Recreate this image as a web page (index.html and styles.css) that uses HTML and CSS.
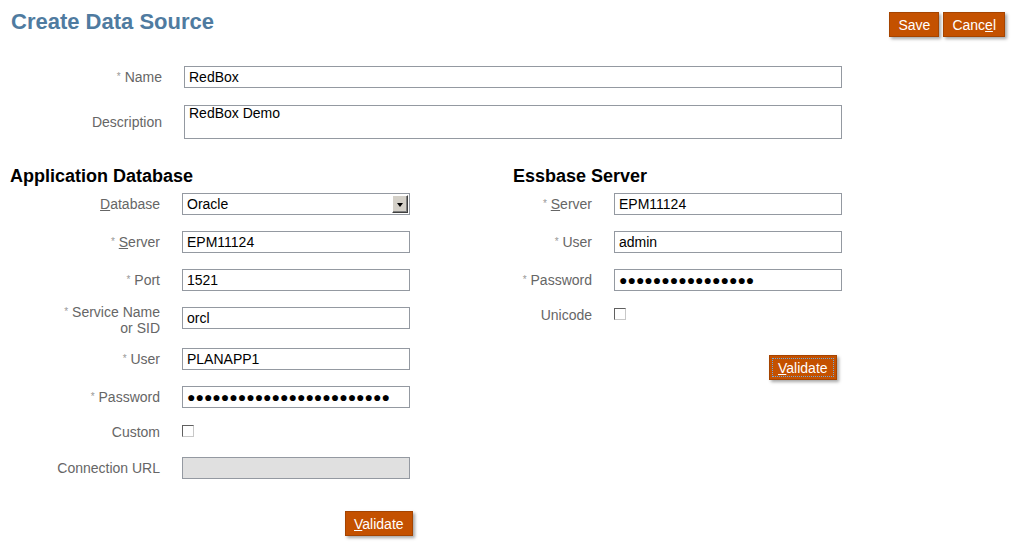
FILE: index.html
```
<!DOCTYPE html>
<html>
<head>
<meta charset="utf-8">
<link rel="stylesheet" href="styles.css">
</head>
<body>
<div class="page">
  <div class="header">
    <h1 class="title">Create Data Source</h1>
    <div class="actions">
      <button class="btn">Save</button>
      <button class="btn">Canc<u>e</u>l</button>
    </div>
  </div>

  <div class="general">
    <div class="grow">
      <div class="lbl glbl"><span class="req">*</span> Name</div>
      <div class="field wide">RedBox</div>
    </div>
    <div class="grow">
      <div class="lbl glbl">Description</div>
      <div class="field wide area">RedBox Demo</div>
    </div>
  </div>

  <div class="cols">
    <div class="section left">
      <h2 class="sechead">Application Database</h2>
      <div class="row">
        <div class="lbl llbl"><u>D</u>atabase</div>
        <div class="field select">Oracle<span class="dd"><span class="tri"></span></span></div>
      </div>
      <div class="row">
        <div class="lbl llbl"><span class="req">*</span> <u>S</u>erver</div>
        <div class="field">EPM11124</div>
      </div>
      <div class="row">
        <div class="lbl llbl"><span class="req">*</span> Port</div>
        <div class="field">1521</div>
      </div>
      <div class="row two">
        <div class="lbl llbl"><span class="req">*</span> Service Name<br>or SID</div>
        <div class="field top">orcl</div>
      </div>
      <div class="row">
        <div class="lbl llbl"><span class="req">*</span> User</div>
        <div class="field">PLANAPP1</div>
      </div>
      <div class="row">
        <div class="lbl llbl"><span class="req">*</span> Password</div>
        <div class="field pw">●●●●●●●●●●●●●●●●●●●●●●●●</div>
      </div>
      <div class="row chkrow">
        <div class="lbl llbl">Custom</div>
        <div class="chk"></div>
      </div>
      <div class="row urlrow">
        <div class="lbl llbl">Connection URL</div>
        <div class="field disabled"></div>
      </div>
      <div class="valrow lval">
        <button class="btn"><u>V</u>alidate</button>
      </div>
    </div>

    <div class="section right">
      <h2 class="sechead">Essbase Server</h2>
      <div class="row">
        <div class="lbl rlbl"><span class="req">*</span> <u>S</u>erver</div>
        <div class="field">EPM11124</div>
      </div>
      <div class="row">
        <div class="lbl rlbl"><span class="req">*</span> User</div>
        <div class="field">admin</div>
      </div>
      <div class="row">
        <div class="lbl rlbl"><span class="req">*</span> Password</div>
        <div class="field pw">●●●●●●●●●●●●●●●●</div>
      </div>
      <div class="row chkrow2">
        <div class="lbl rlbl">Unicode</div>
        <div class="chk"></div>
      </div>
      <div class="valrow rval">
        <button class="btn focus"><u>V</u>alidate</button>
      </div>
    </div>
  </div>
</div>
</body>
</html>
```
FILE: styles.css
```
* { box-sizing: border-box; }
body {
  margin: 0;
  background: #fff;
  font-family: "Liberation Sans", Arial, sans-serif;
  font-size: 14px;
  color: #000;
}
.page { width: 1024px; height: 548px; overflow: hidden; }

.header {
  display: flex;
  justify-content: space-between;
  align-items: flex-start;
  padding: 8px 19px 0 11px;
  height: 66px;
}
.title {
  margin: 0;
  font-size: 22px;
  font-weight: bold;
  color: #4f7ba0;
  line-height: 27px;
}
.actions { display: flex; gap: 4px; padding-top: 4px; }
.btn {
  font-family: "Liberation Sans", Arial, sans-serif;
  font-size: 14px;
  color: #fff;
  background: #c45100;
  border: 1px solid #a54400;
  height: 25px;
  padding: 0 8px;
  box-shadow: 2px 2px 3px rgba(0,0,0,0.35);
  line-height: 22px;
  cursor: pointer;
}
.btn.focus { outline: 1px dotted #6fa8dc; outline-offset: -4px; }

.lbl {
  color: #666;
  text-align: right;
  line-height: 16px;
}
.lbl u { text-decoration-color: #666; }
.req {
  color: #999;
  font-size: 10px;
  vertical-align: 2px;
}
.field {
  width: 228px;
  height: 22px;
  border: 1px solid #9499a1;
  padding: 1px 4px 0;
  line-height: 19px;
  background: #fff;
  color: #000;
  white-space: nowrap;
  overflow: hidden;
}

.general { display: flex; flex-direction: column; gap: 17px; }
.grow { display: flex; align-items: center; }
.glbl { width: 162px; margin-right: 22px; }
.field.wide { width: 658px; }
.field.area { height: 34px; line-height: 13px; padding-top: 1px; }

.cols { display: flex; padding-top: 27px; }
.section { display: flex; flex-direction: column; }
.left { width: 502px; padding-left: 10px; }
.right { width: 400px; padding-left: 11px; }
.sechead {
  margin: 0 0 7px;
  font-size: 18px;
  font-weight: bold;
  line-height: 20px;
}
.row { display: flex; align-items: center; height: 22px; margin-bottom: 16px; }
.llbl { width: 150px; margin-right: 22px; }
.rlbl { width: 79px; margin-right: 22px; }

.select { position: relative; padding-right: 20px; }
.dd {
  position: absolute;
  right: 1px; top: 1px;
  width: 16px; height: 18px;
  background: #d4d0c8;
  border: 1px solid;
  border-color: #fff #404040 #404040 #fff;
  box-shadow: inset -1px -1px 0 #808080;
}
.tri {
  position: absolute;
  left: 4px; top: 7px;
  width: 0; height: 0;
  border-left: 3.5px solid transparent;
  border-right: 3.5px solid transparent;
  border-top: 4px solid #000;
}

.row.two { height: 32px; margin-top: -3px; margin-bottom: 12px; align-items: flex-start; }
.row.two .field.top { margin-top: 3px; }
.pw { font-family: "Liberation Sans", Arial, sans-serif; font-size: 14px; letter-spacing: 0; padding-left: 4px; }

.chk {
  width: 12px; height: 12px;
  border: 1px solid;
  border-color: #606060 #c8c8c8 #c8c8c8 #606060;
  background: #fff;
}
.chkrow { height: 16px; margin-bottom: 17px; }
.chkrow .chk { margin-top: -2px; }
.urlrow .field.disabled { background: #e0e0e0; }
.chkrow2 { height: 16px; }
.chkrow2 .chk { margin-top: -2px; }

.valrow { display: flex; }
.lval { margin-top: 16px; padding-left: 335px; }
.rval { margin-top: 16px; padding-left: 256px; }
```
